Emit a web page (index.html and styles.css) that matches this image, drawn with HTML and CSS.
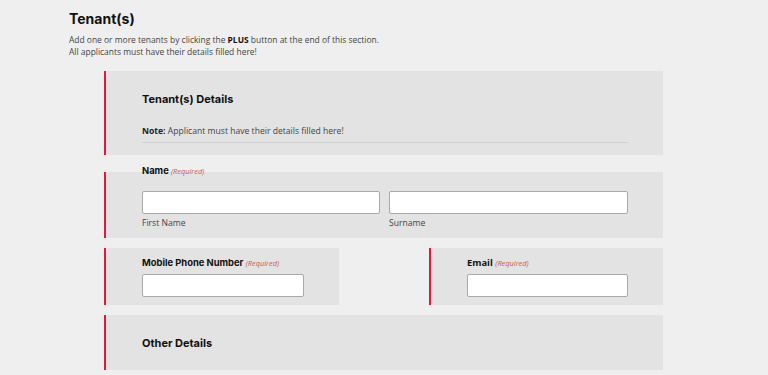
FILE: index.html
```html
<!DOCTYPE html>
<html>
<head>
<meta charset="utf-8">
<link rel="stylesheet" href="styles.css">
</head>
<body>
<div class="page">
  <h2 class="page-title">Tenant(s)</h2>
  <p class="intro">Add one or more tenants by clicking the <b>PLUS</b> button at the end of this section.<br>All applicants must have their details filled here!</p>

  <div class="form">
    <section class="box box-details">
      <h3 class="box-title">Tenant(s) Details</h3>
      <p class="note"><b>Note:</b> Applicant must have their details filled here!</p>
    </section>

    <section class="box box-name">
      <div class="label">Name <span class="req">(Required)</span></div>
      <div class="name-grid">
        <div class="field">
          <div class="input"></div>
          <div class="sub">First Name</div>
        </div>
        <div class="field">
          <div class="input"></div>
          <div class="sub">Surname</div>
        </div>
      </div>
    </section>

    <div class="row">
      <section class="box box-half">
        <div class="label label-top">Mobile Phone Number <span class="req">(Required)</span></div>
        <div class="input"></div>
      </section>
      <section class="box box-half">
        <div class="label label-top label-sans">Email <span class="req">(Required)</span></div>
        <div class="input"></div>
      </section>
    </div>

    <section class="box box-other">
      <h3 class="box-title">Other Details</h3>
    </section>
  </div>
</div>
</body>
</html>
```

FILE: styles.css
```css
html, body {
  margin: 0;
  padding: 0;
  background: #efefef;
  font-family: "Open Sans", "Liberation Sans", sans-serif;
  color: #333;
}

.page {
  padding: 10px 0 0 69px;
}

.page-title {
  margin: 0;
  font-family: Inter, "Liberation Sans", sans-serif;
  font-weight: 700;
  font-size: 14px;
  line-height: 17px;
  color: #111;
}

.intro {
  margin: 7px 0 0;
  font-size: 8.45px;
  line-height: 12px;
  color: #444;
}

.intro b {
  color: #111;
}

.form {
  margin: 13px 0 0 35px;
  width: 559px;
  display: flex;
  flex-direction: column;
}

.box {
  background: #e3e3e3;
  border-left: 2px solid #e5173f;
  box-sizing: border-box;
  padding: 0 35px 0 36px;
}

.box-details {
  height: 84px;
  padding-top: 21px;
}

.box-title {
  margin: 0;
  font-family: Inter, "Liberation Sans", sans-serif;
  font-weight: 700;
  font-size: 11px;
  line-height: 14px;
  color: #111;
}

.note {
  margin: 19px 0 0;
  padding-bottom: 5px;
  border-bottom: 1px solid #d0d0d0;
  font-size: 8.6px;
  line-height: 12px;
  color: #444;
}

.note b {
  color: #222;
}

.box-name {
  margin-top: 17px;
  height: 66px;
}

.label {
  font-family: Inter, "Liberation Sans", sans-serif;
  font-weight: 700;
  font-size: 9.4px;
  line-height: 12px;
  color: #111;
}

.box-name .label {
  margin-top: -7px;
}

.req {
  font-family: "Open Sans", "Liberation Sans", sans-serif;
  font-style: italic;
  font-weight: 400;
  font-size: 7.4px;
  color: #c9594f;
}

.name-grid {
  display: grid;
  grid-template-columns: 238px 239px;
  column-gap: 9px;
  margin-top: 14px;
}

.input {
  height: 23px;
  background: #fff;
  border: 1px solid #a9a9a9;
  border-radius: 2px;
  box-sizing: border-box;
}

.sub {
  margin-top: 3px;
  font-size: 8.6px;
  line-height: 12px;
  color: #444;
}

.row {
  margin-top: 10px;
  display: flex;
  justify-content: space-between;
}

.box-half {
  width: 235px;
  height: 57px;
  padding-top: 9px;
}

.box-half + .box-half {
  width: 234px;
}

.label-top {
  margin-bottom: 5px;
}

.label-sans {
  font-family: "Open Sans", "Liberation Sans", sans-serif;
}

.box-other {
  margin-top: 10px;
  height: 55px;
  display: flex;
  align-items: center;
}
```
